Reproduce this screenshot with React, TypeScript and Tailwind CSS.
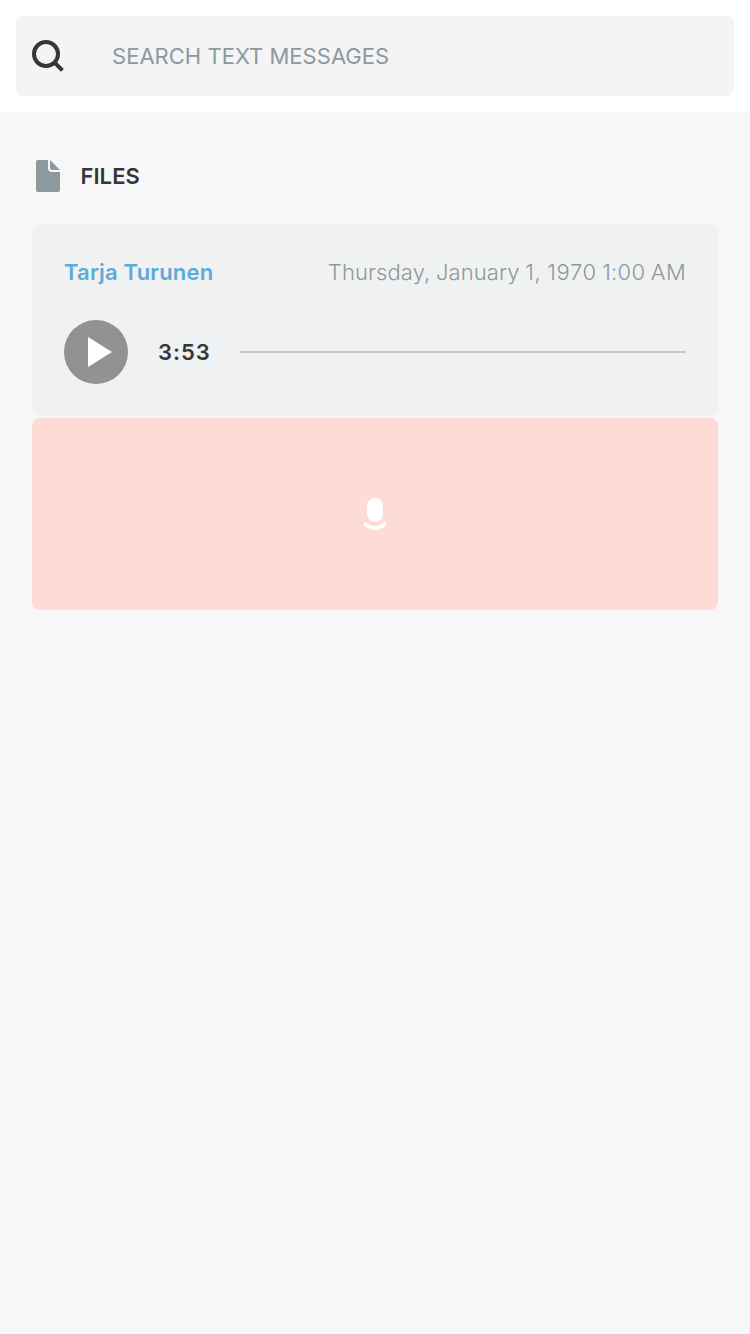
export default function App() {
  return (
    <div className="flex h-[1334px] w-[750px] flex-col bg-[#f7f7f7] font-['Inter','Liberation_Sans',sans-serif] text-[22px] leading-8">
      <header className="bg-white p-4">
        <label className="flex h-20 items-center rounded-lg bg-[#f4f4f4] pl-4">
          <svg width="32" height="32" viewBox="0 0 32 32" fill="none" stroke="#33373a" strokeWidth="4">
            <circle cx="14" cy="14" r="12" />
            <path d="M22 22 30.4 30.4" />
          </svg>
          <span className="ml-12 tracking-[0.02px] text-[#8d989f]">SEARCH TEXT MESSAGES</span>
        </label>
      </header>
      <main className="flex flex-col px-8 pt-12">
        <div className="flex h-8 items-center pl-1">
          <svg width="24" height="32" viewBox="0 0 24 32" fill="#8d989f">
            <path d="M2 0H12V8Q12 12 16 12H24V30Q24 32 22 32H2Q0 32 0 30V2Q0 0 2 0Z" />
            <path d="M14 0 24 10H16Q14 10 14 8Z" />
          </svg>
          <h2 className="ml-[20.4px] font-semibold tracking-[0.1px] text-[#33373a]">FILES</h2>
        </div>
        <section className="mt-8 h-48 rounded-lg bg-[#f0f2f2] px-2 pt-8">
          <div className="flex h-8 items-center justify-between px-6">
            <span className="font-semibold tracking-[0.17px] text-[#60a9dc]">Tarja Turunen</span>
            <time className="font-light tracking-[0.11px] text-[#8d989f] [word-spacing:-0.8px]">
              Thursday, January <span className="tracking-[0.6px]">1, 1970</span> <span className="tracking-[0.25px]">1:00 AM</span>
            </time>
          </div>
          <div className="mt-2 flex h-28 items-center bg-[#f0f1f3] px-6">
            <svg width="64" height="64" viewBox="0 0 64 64">
              <circle cx="32" cy="32" r="32" fill="#929292" />
              <path d="M24 17 48 32 24 47Z" fill="#fff" />
            </svg>
            <span className="ml-[30px] w-[82px] font-semibold tracking-[1px] text-[#33373a]">3:53</span>
            <div className="h-0.5 flex-1 bg-[#c0c5ca]" />
          </div>
        </section>
        <section className="mt-0.5 flex h-48 items-center justify-center rounded-lg bg-[#ffdbd5]">
          <svg width="24" height="32" viewBox="0 0 24 32">
            <rect x="4" width="16" height="24" rx="8" fill="#fff" />
            <path d="M1.2 25.2Q12 34.8 22.8 25.2" fill="none" stroke="#fff" strokeWidth="4" />
          </svg>
        </section>
      </main>
    </div>
  );
}
